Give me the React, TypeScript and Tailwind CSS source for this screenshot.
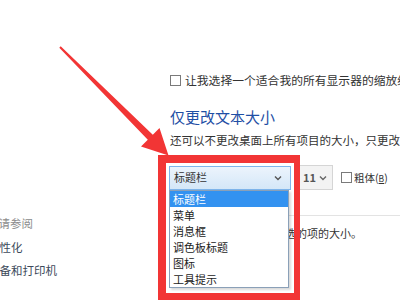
import React from 'react'

const ITEMS = ['标题栏', '菜单', '消息框', '调色板标题', '图标', '工具提示']

function Box() {
  return <span className="inline-block w-[11px] h-[11px] border border-[#7a7a7a] bg-white shrink-0" />
}

export default function App() {
  return (
    <div
      className="relative w-[400px] h-[300px] overflow-hidden bg-white text-[#333]"
      style={{ fontFamily: '"Noto Sans CJK SC", "Noto Sans", sans-serif' }}
    >
      <div className="flex">
        {/* see also */}
        <aside className="w-[170px] shrink-0 pt-[215px] whitespace-nowrap text-[11.5px] leading-[16px]">
          <div className="-ml-[13px] text-[#8c8c8c]">另请参阅</div>
          <div className="mt-[8px] -ml-[12px] text-[#3d4a5b]">个性化</div>
          <div className="mt-[7px] -ml-[12px] text-[#3d4a5b]">设备和打印机</div>
        </aside>

        <main className="flex-1 min-w-0 pt-[73px] whitespace-nowrap">
          <label className="flex items-center gap-[4px] h-[14px] text-[11.8px]">
            <Box />
            <span>让我选择一个适合我的所有显示器的缩放级别</span>
          </label>

          <h2 className="mt-[20px] text-[15px] leading-[20px] text-[#1f4fa5]">仅更改文本大小</h2>
          <p className="mt-[6px] text-[11.5px] leading-[14px]">
            还可以不更改桌面上所有项目的大小，只更改特定项的文本大小。
          </p>

          <div className="mt-[18px] flex items-center h-[25px]">
            <div className="relative w-[122px] h-[24px] -ml-px shrink-0">
              <div className="flex items-center justify-between h-full px-[4px] border border-[#7eb4ea] bg-gradient-to-b from-[#ecf4fc] to-[#d4e7f8] text-[11px]">
                <span>标题栏</span>
                <svg width="8" height="6" viewBox="0 0 8 6" className="mr-[4px]">
                  <path d="M1 1.5 L4 4.5 L7 1.5" fill="none" stroke="#555" strokeWidth="1.4" />
                </svg>
              </div>
              <ul className="absolute top-full left-0 w-[120px] border border-[#8aa0b8] bg-white text-[11px] leading-[16px] shadow-[2px_2px_2px_rgba(0,0,0,0.15)]">
                {ITEMS.map((t, i) => (
                  <li
                    key={t}
                    className={i === 0 ? 'px-[3px] bg-[#3392f0] text-white' : 'px-[3px] text-[#222]'}
                  >
                    {t}
                  </li>
                ))}
              </ul>
            </div>

            <div className="ml-[5px] w-[37px] h-[25px] shrink-0 flex items-center justify-between pl-[6px] pr-[5px] border border-[#d5d5d5] bg-[#f3f3f3] text-[11px] font-bold text-[#555]">
              <span>11</span>
              <svg width="8" height="6" viewBox="0 0 8 6">
                <path d="M1 1.5 L4 4.5 L7 1.5" fill="none" stroke="#666" strokeWidth="1.4" />
              </svg>
            </div>

            <label className="ml-[8px] shrink-0 flex items-center gap-[2px] text-[10.5px]">
              <Box />
              <span>
                粗体(<span className="underline text-[8.5px]">B</span>)
              </span>
            </label>
          </div>

          <div className="mt-[25px] border-t border-[#e3e3e3]" />
          <p className="mt-[10px] pl-[104px] text-[11px] leading-[14px]">所选的项的大小。</p>
        </main>
      </div>

      {/* annotation: red frame */}
      <div className="absolute left-[158px] top-[155px] w-[142px] h-[150px] border-l-8 border-t-8 border-r-[6px] border-b-[12px] border-[#f23535]" />

      {/* annotation: arrow */}
      <svg className="absolute left-0 top-0" width="400" height="300" viewBox="0 0 400 300">
        <polygon
          points="60.7,46.3 152.8,134.8 159.5,128 168.5,155.5 141,146.5 147.8,139.8 59.3,47.7"
          fill="#f23535"
        />
      </svg>
    </div>
  )
}
